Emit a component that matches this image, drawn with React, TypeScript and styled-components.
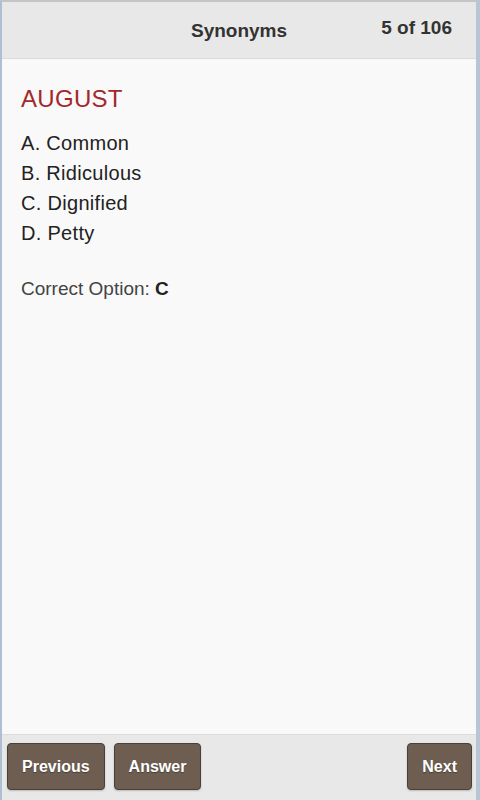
import React from 'react';
import styled, { createGlobalStyle } from 'styled-components';

const GlobalStyle = createGlobalStyle`
  html, body {
    margin: 0;
    padding: 0;
    background: #f9f9f9;
  }
  * {
    box-sizing: border-box;
  }
`;

interface Question {
  word: string;
  options: string[];
  answer: string;
}

const question: Question = {
  word: 'AUGUST',
  options: ['Common', 'Ridiculous', 'Dignified', 'Petty'],
  answer: 'C',
};

const Frame = styled.div`
  display: flex;
  flex-direction: column;
  height: 800px;
  border-top: 2px solid #c4c4c4;
  border-left: 2px solid #aebfd3;
  border-right: 4px solid #b8c5d4;
  font-family: 'Liberation Sans', Arial, sans-serif;
  background: #f9f9f9;
`;

const Header = styled.header`
  display: grid;
  grid-template-columns: 1fr auto 1fr;
  align-items: start;
  height: 57px;
  background: #e8e8e8;
  border-bottom: 1px solid #dadada;
`;

const Title = styled.h1`
  grid-column: 2;
  margin: 0;
  padding-top: 18px;
  font-size: 19px;
  line-height: 22px;
  font-weight: bold;
  color: #333;
`;

const Counter = styled.div`
  grid-column: 3;
  justify-self: end;
  padding: 15px 24px 0 0;
  font-size: 19px;
  line-height: 22px;
  font-weight: bold;
  color: #333;
`;

const Content = styled.main`
  flex: 1;
  padding: 26px 19px 0;
`;

const Word = styled.h2`
  margin: 0 0 15px;
  font-size: 24px;
  line-height: 28px;
  font-weight: normal;
  letter-spacing: 0.3px;
  color: #a3282a;
`;

const OptionList = styled.ol`
  list-style: none;
  margin: 0;
  padding: 0;
`;

const Option = styled.li`
  font-size: 20px;
  line-height: 30px;
  letter-spacing: 0.3px;
  color: #222;
`;

const Correct = styled.p`
  margin: 29px 0 0;
  font-size: 19px;
  line-height: 24px;
  color: #444;

  b {
    color: #222;
  }
`;

const Footer = styled.footer`
  display: flex;
  gap: 9px;
  height: 66px;
  padding: 8px 4px 0 5px;
  background: #e8e8e8;
  border-top: 1px solid #dcdcdc;
`;

const Button = styled.button<{ $push?: boolean }>`
  height: 47px;
  padding: 0 14px;
  margin-left: ${(p) => (p.$push ? 'auto' : '0')};
  background: #6e5e51;
  border: 1px solid #4b4038;
  border-radius: 4px;
  color: #fff;
  font-family: 'Liberation Sans', Arial, sans-serif;
  font-size: 16px;
  font-weight: bold;
  text-shadow: 0 1px 1px rgba(0, 0, 0, 0.35);
  box-shadow: 0 1px 2px rgba(0, 0, 0, 0.2);
  cursor: pointer;
`;

const App: React.FC = () => {
  const letters = ['A', 'B', 'C', 'D'];
  return (
    <>
      <GlobalStyle />
      <Frame>
        <Header>
          <Title>Synonyms</Title>
          <Counter>5 of 106</Counter>
        </Header>
        <Content>
          <Word>{question.word}</Word>
          <OptionList>
            {question.options.map((opt, i) => (
              <Option key={opt}>
                {letters[i]}. {opt}
              </Option>
            ))}
          </OptionList>
          <Correct>
            Correct Option: <b>{question.answer}</b>
          </Correct>
        </Content>
        <Footer>
          <Button>Previous</Button>
          <Button>Answer</Button>
          <Button $push>Next</Button>
        </Footer>
      </Frame>
    </>
  );
};

export default App;
